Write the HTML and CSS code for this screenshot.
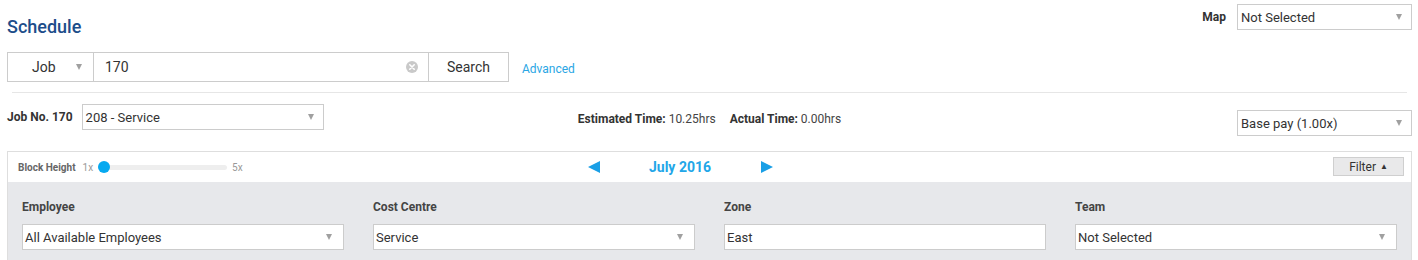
FILE: index.html
```html
<!DOCTYPE html>
<html lang="en">
<head>
<meta charset="utf-8">
<title>Schedule</title>
<link rel="stylesheet" href="styles.css">
</head>
<body>
<div class="page">
  <div class="top">
    <h1 class="title">Schedule</h1>
    <div class="map">
      <span class="map-label">Map</span>
      <div class="select select-map"><span>Not Selected</span><span class="caret"></span></div>
    </div>
  </div>

  <div class="searchrow">
    <div class="searchbox">
      <div class="stype"><span>Job</span><span class="caret"></span></div>
      <div class="query">
        <span>170</span>
        <svg class="clear" width="12" height="12" viewBox="0 0 12 12"><circle cx="6" cy="6" r="6" fill="#c9c9c9"/><path d="M3.8 3.8 L8.2 8.2 M8.2 3.8 L3.8 8.2" stroke="#fff" stroke-width="1.6" stroke-linecap="round"/></svg>
      </div>
      <div class="sbtn">Search</div>
    </div>
    <a class="advanced" href="#">Advanced</a>
  </div>

  <hr class="divider">

  <div class="jobrow">
    <div class="jobleft">
      <span class="joblabel">Job No. 170</span>
      <div class="select select-job"><span>208 - Service</span><span class="caret"></span></div>
    </div>
    <div class="times">
      <b>Estimated Time:</b> 10.25hrs<span class="sp"></span><b>Actual Time:</b> 0.00hrs
    </div>
    <div class="jobright">
      <div class="select select-pay"><span>Base pay (1.00x)</span><span class="caret"></span></div>
    </div>
  </div>

  <div class="panel">
    <div class="phead">
      <div class="bh">
        <span class="bh-label">Block Height</span>
        <span class="bh-x">1x</span>
        <div class="slider"><span class="knob"></span></div>
        <span class="bh-x">5x</span>
      </div>
      <div class="nav">
        <span class="arrow arrow-left"></span>
        <span class="month">July 2016</span>
        <span class="arrow arrow-right"></span>
      </div>
      <div class="fbtn-wrap"><div class="fbtn">Filter <span class="up">▲</span></div></div>
    </div>
    <div class="filters">
      <div class="fcol">
        <div class="flabel">Employee</div>
        <div class="select fsel"><span>All Available Employees</span><span class="caret"></span></div>
      </div>
      <div class="fcol">
        <div class="flabel">Cost Centre</div>
        <div class="select fsel"><span>Service</span><span class="caret"></span></div>
      </div>
      <div class="fcol">
        <div class="flabel">Zone</div>
        <div class="select fsel"><span>East</span></div>
      </div>
      <div class="fcol">
        <div class="flabel">Team</div>
        <div class="select fsel"><span>Not Selected</span><span class="caret"></span></div>
      </div>
    </div>
  </div>
</div>
</body>
</html>
```
FILE: styles.css
```css
* { box-sizing: border-box; }
html, body { margin: 0; padding: 0; background: #fff; }
body {
  font-family: Roboto, "Liberation Sans", Arial, sans-serif;
  color: #333;
  font-size: 13px;
}
.page { padding: 0 6px 0 7px; width: 1418px; }

.top {
  display: flex;
  justify-content: space-between;
  align-items: flex-start;
  height: 37px;
}
.title {
  margin: 17px 0 0;
  font-size: 18px;
  line-height: 20px;
  font-weight: 500;
  color: #1d4d8a;
}
.map {
  margin-top: 4px;
  display: flex;
  align-items: center;
  gap: 11px;
}
.map-label { font-size: 12px; font-weight: 700; color: #333; }

.select {
  height: 26px;
  border: 1px solid #ccc;
  background: #fff;
  display: flex;
  align-items: center;
  justify-content: space-between;
  padding: 0 9px 0 3px;
  font-size: 13px;
  color: #333;
}
.caret {
  width: 0; height: 0;
  border-left: 3.5px solid transparent;
  border-right: 3.5px solid transparent;
  border-top: 6px solid #a0a0a0;
}
.select-map { width: 175px; }

.searchrow {
  margin-top: 15px;
  display: flex;
  align-items: center;
}
.searchbox {
  display: flex;
  height: 30px;
  border: 1px solid #ccc;
  font-size: 14px;
  color: #333;
}
.stype {
  width: 86px;
  border-right: 1px solid #ccc;
  display: flex;
  align-items: center;
  justify-content: space-between;
  padding: 0 11px 0 24px;
}
.query {
  width: 335px;
  border-right: 1px solid #ccc;
  display: flex;
  align-items: center;
  justify-content: space-between;
  padding: 0 10px 0 11px;
}
.sbtn {
  width: 79px;
  display: flex;
  align-items: center;
  justify-content: center;
}
.advanced {
  margin: 4px 0 0 13px;
  font-size: 12px;
  color: #2aa6e4;
  text-decoration: none;
}

.divider {
  margin: 10px 5px 0;
  border: 0;
  border-top: 1px solid #e6e6e6;
  height: 0;
}

.jobrow {
  margin-top: 11px;
  display: grid;
  grid-template-columns: 1fr 1fr 1fr;
  align-items: start;
}
.jobleft { display: flex; align-items: center; gap: 9px; }
.joblabel { font-size: 12px; font-weight: 700; color: #333; }
.select-job { width: 242px; }
.times {
  margin-top: 7px;
  text-align: center;
  font-size: 12px;
  line-height: 16px;
  color: #444;
}
.times b { color: #333; }
.sp { display: inline-block; width: 14px; }
.jobright { display: flex; justify-content: flex-end; }
.select-pay { width: 175px; margin-top: 6px; }

.panel {
  margin-top: 15px;
  border: 1px solid #dedede;
  border-bottom: 0;
}
.phead {
  height: 30px;
  display: grid;
  grid-template-columns: 570px auto 1fr;
  align-items: center;
  padding: 0 7px 0 10px;
}
.bh { display: flex; align-items: center; }
.bh-label { font-size: 10px; font-weight: 700; color: #666; margin-right: 7px; }
.bh-x { font-size: 10px; color: #999; }
.slider {
  position: relative;
  width: 129px;
  height: 5px;
  margin: 0 5px;
  background: #eee;
  border-radius: 3px;
}
.knob {
  position: absolute;
  left: 0;
  top: -4px;
  width: 12px;
  height: 12px;
  border-radius: 50%;
  background: #06a9f0;
}
.nav { display: flex; align-items: center; }
.arrow { width: 0; height: 0; border-top: 6.5px solid transparent; border-bottom: 6.5px solid transparent; margin-top: -1px; }
.arrow-left { border-right: 12px solid #1a9fe6; }
.arrow-right { border-left: 12px solid #1a9fe6; }
.month {
  margin: 0 50px 0 49px;
  font-size: 14px;
  font-weight: 700;
  color: #22a6e8;
}
.fbtn-wrap { display: flex; justify-content: flex-end; }
.fbtn {
  width: 71px;
  height: 19px;
  background: #e9e9ea;
  border: 1px solid #cfcfcf;
  font-size: 12px;
  color: #333;
  display: flex;
  align-items: center;
  justify-content: center;
  gap: 4px;
  margin-top: -1px;
}
.up { font-size: 8px; }

.filters {
  background: #e7e8eb;
  padding: 17px 14px 10px;
  display: grid;
  grid-template-columns: repeat(4, 1fr);
  gap: 29px;
}
.flabel {
  font-size: 12px;
  line-height: 16px;
  font-weight: 700;
  color: #444;
  margin-bottom: 9px;
}
.fsel { padding-left: 2px; padding-right: 11px; }
```
